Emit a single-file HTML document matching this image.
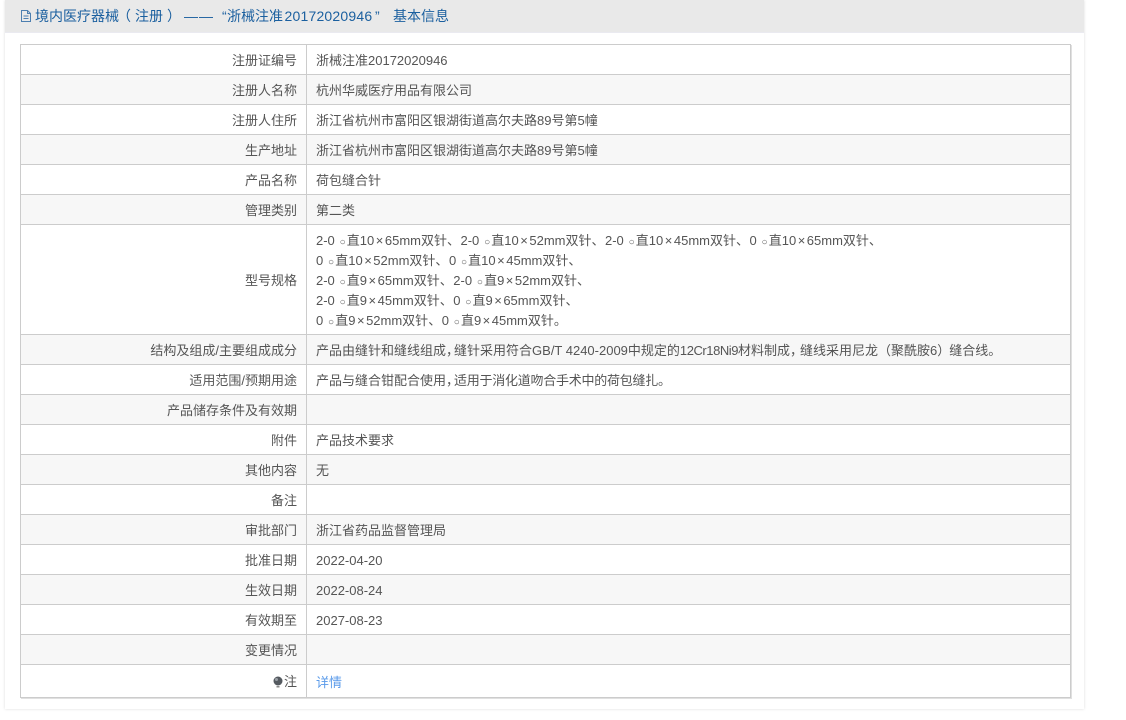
<!DOCTYPE html>
<html lang="zh-CN">
<head>
<meta charset="utf-8">
<style>
html,body{margin:0;padding:0;background:#fff;}
body{width:1126px;height:720px;overflow:hidden;position:relative;font-family:"Liberation Sans","Noto Sans CJK SC",sans-serif;font-size:13px;color:#555;}
#panel{position:absolute;left:5px;top:0;width:1079px;height:709px;background:#fff;box-shadow:0 0 3px rgba(0,0,0,.14);}
#head{position:absolute;left:0;top:0;width:1079px;height:33px;background:#e9e9e9;border-bottom:1px solid #eaeaf0;box-sizing:border-box;font-size:14px;line-height:33px;color:#1a5f9f;white-space:nowrap;}
#head svg{position:absolute;left:16px;top:10px;}
#head span{position:absolute;top:0;}
table{position:absolute;left:15px;top:44px;width:1051px;border-collapse:collapse;table-layout:fixed;box-shadow:1px 1px 0 #e0e0e0;}
td{border:1px solid #ccc;box-sizing:border-box;padding:2px 0 0;height:30px;line-height:20px;}
td:first-child{width:286px;text-align:right;padding-right:9px;}
td:last-child{padding-left:9px;}
tr:nth-child(even) td{background:#f7f7f7;}
a{color:#5b9bea;text-decoration:none;}
.o{display:inline-block;width:8.4px;text-align:center;font-style:normal;font-size:10px;line-height:10px;}
.x{padding:0 1.5px;}
.d{letter-spacing:.5px;}
.c{margin-right:-5px;}
.e{margin-right:-3px;}
.p{margin-right:-1px;}
.n{letter-spacing:-.45px;}
.t{letter-spacing:-.25px;}
.b{vertical-align:-2px;margin-right:1px;}
</style>
</head>
<body>
<div id="panel">
<div id="head"><svg width="10" height="12" viewBox="0 0 10 12" fill="none" stroke="#4d7fb0" stroke-width="1"><path d="M.5 .5h6l3 3v8h-9zM6.500 .5v3h3M2.500 6h5M2.500 8.500h5"/></svg><span style="left:30px">境内医疗器械</span><span style="left:112px">（</span><span style="left:130px">注册</span><span style="left:162px">）</span><span style="left:179px;letter-spacing:1px">——</span><span style="left:217px">“</span><span style="left:222px">浙械注准</span><span style="left:279.500px;letter-spacing:.2px">20172020946</span><span style="left:370px">”</span><span style="left:388px">基本信息</span></div>
<table>
<tr><td>注册证编号</td><td>浙械注准20172020946</td></tr>
<tr><td>注册人名称</td><td>杭州华威医疗用品有限公司</td></tr>
<tr><td>注册人住所</td><td>浙江省杭州市富阳区银湖街道高尔夫路89号第5幢</td></tr>
<tr><td>生产地址</td><td>浙江省杭州市富阳区银湖街道高尔夫路89号第5幢</td></tr>
<tr><td>产品名称</td><td>荷包缝合针</td></tr>
<tr><td>管理类别</td><td>第二类</td></tr>
<tr style="height:110px"><td style="height:110px">型号规格</td><td style="height:110px">2-0 <i class="o">○</i>直10<span class="x">×</span>65mm双针<span class="d">、</span>2-0 <i class="o">○</i>直10<span class="x">×</span>52mm双针<span class="d">、</span>2-0 <i class="o">○</i>直10<span class="x">×</span>45mm双针<span class="d">、</span>0 <i class="o">○</i>直10<span class="x">×</span>65mm双针、<br>0 <i class="o">○</i>直10<span class="x">×</span>52mm双针<span class="d">、</span>0 <i class="o">○</i>直10<span class="x">×</span>45mm双针、<br>2-0 <i class="o">○</i>直9<span class="x">×</span>65mm双针<span class="d">、</span>2-0 <i class="o">○</i>直9<span class="x">×</span>52mm双针、<br>2-0 <i class="o">○</i>直9<span class="x">×</span>45mm双针<span class="d">、</span>0 <i class="o">○</i>直9<span class="x">×</span>65mm双针、<br>0 <i class="o">○</i>直9<span class="x">×</span>52mm双针<span class="d">、</span>0 <i class="o">○</i>直9<span class="x">×</span>45mm双针。</td></tr>
<tr><td>结构及组成/主要组成成分</td><td>产品由缝针和缝线组成<span class="c">，</span>缝针采用符合GB/T 4240-2009中规定的<span class="n">12Cr18Ni9</span>材料制成<span class="e">，</span>缝线采用尼龙（聚酰胺6<span class="p">）</span>缝合线。</td></tr>
<tr><td>适用范围/预期用途</td><td>产品与缝合钳配合使用<span class="c">，</span><span class="t">适用于消化道吻合手术中的荷包缝扎。</span></td></tr>
<tr><td>产品储存条件及有效期</td><td></td></tr>
<tr><td>附件</td><td>产品技术要求</td></tr>
<tr><td>其他内容</td><td>无</td></tr>
<tr><td>备注</td><td></td></tr>
<tr><td>审批部门</td><td>浙江省药品监督管理局</td></tr>
<tr><td>批准日期</td><td>2022-04-20</td></tr>
<tr><td>生效日期</td><td>2022-08-24</td></tr>
<tr><td>有效期至</td><td>2027-08-23</td></tr>
<tr><td>变更情况</td><td></td></tr>
<tr><td style="height:33px;padding-top:1px"><svg class="b" width="10" height="12" viewBox="0 0 10 12"><circle cx="5" cy="5" r="4.500" fill="#555a60"/><circle cx="3.500" cy="3.500" r="1.500" fill="#9aa0a6"/><path d="M3.500 10h3v1.500h-3z" fill="#888"/></svg>注</td><td style="height:33px;padding-top:3px"><a href="#">详情</a></td></tr>
</table>
</div>
</body>
</html>
